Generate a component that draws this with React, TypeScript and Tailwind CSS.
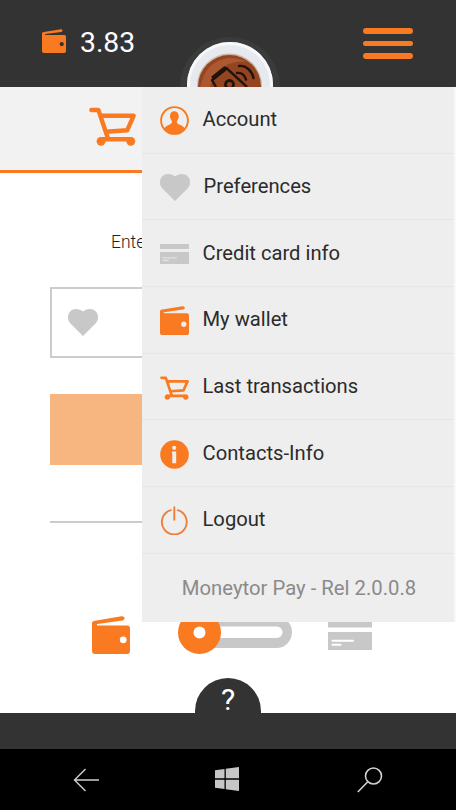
import React from "react";

type IconProps = { className?: string };

const WalletIcon: React.FC<IconProps & { hole?: string }> = ({
  className,
  hole = "#ffffff",
}) => (
  <svg viewBox="0 0 38 38" className={className} fill="#f97a20">
    <path d="M0 7.5C0 5.5 1.2 5 3 4.7L29.6.3c3.4-.4 4 3.6.8 4.3L5.5 8.1H5v1.5h30c2 0 3 1 3 3V35c0 2-1 3-3 3H3.2C1.2 38 0 37 0 35z" />
    <circle cx="31.2" cy="23.8" r="3.4" fill={hole} />
  </svg>
);

const CartIcon: React.FC<IconProps> = ({ className }) => (
  <svg
    viewBox="0 0 47 39"
    className={className}
    fill="none"
    stroke="#f97a20"
    strokeWidth="4.4"
    strokeLinecap="round"
    strokeLinejoin="round"
  >
    <path d="M2.4 3H9.4L19 31.5M11.5 8.8H44.6L38.3 23.2L17 24.8M12 32.2H41.5" />
    <circle cx="12" cy="34.3" r="4.4" fill="#f97a20" stroke="none" />
    <circle cx="41.8" cy="34.3" r="4.4" fill="#f97a20" stroke="none" />
  </svg>
);

const HeartIcon: React.FC<IconProps> = ({ className }) => (
  <svg viewBox="0 0 30 27" className={className} fill="#c8c8c8">
    <path d="M15 27L2.5 14.5C-1 11-.7 5.5 2.2 2.5C5.7-1 11.5-.4 15 2.6C18.5-.4 24.3-1 27.8 2.5C30.7 5.5 31 11 27.5 14.5z" />
  </svg>
);

const CardIcon: React.FC<IconProps & { line?: string }> = ({
  className,
  line = "#ffffff",
}) => (
  <svg viewBox="0 0 44 30" className={className} preserveAspectRatio="none">
    <path d="M0 0H44V7.5H0zM0 12H44V30H0z" fill="#c8c8c8" />
    <path
      d="M4.5 20.7H25M4.5 24.7H12.5"
      stroke={line}
      strokeWidth="2"
      strokeLinecap="round"
    />
  </svg>
);

const AccountIcon: React.FC<IconProps> = ({ className }) => (
  <svg viewBox="0 0 29 29" className={className}>
    <circle cx="14.5" cy="14.5" r="13.4" fill="none" stroke="#f97a20" strokeWidth="1.9" />
    <path
      d="M14.2 5.3c2.8 0 4.6 2 4.4 4.8c.5.7.3 1.8-.4 2.3c-.2 1.3-.7 2-1.4 2.7c0 2 .5 2.6 2.2 3.4c2.8 1.2 5 2 6 4.5a13 13 0 0 1-21 0c1-2.5 3.2-3.3 5.8-4.5c1.8-.8 2.2-1.5 2.2-3.4c-.7-.7-1.2-1.5-1.4-2.7c-.8-.5-.9-1.6-.5-2.3c-.2-2.9 1.5-4.8 4.1-4.8z"
      fill="#f97a20"
    />
  </svg>
);

const InfoIcon: React.FC<IconProps> = ({ className }) => (
  <svg viewBox="0 0 29 29" className={className}>
    <circle cx="14.5" cy="14.5" r="14.3" fill="#f97a20" />
    <circle cx="14.2" cy="7.8" r="2.1" fill="#eeeeee" />
    <path d="M12 11.5H16.2V23.2H12.3V13.2H12z" fill="#eeeeee" />
  </svg>
);

const PowerIcon: React.FC<IconProps> = ({ className }) => (
  <svg
    viewBox="0 0 29 29"
    className={className}
    fill="none"
    stroke="#ee7d3a"
    strokeWidth="1.9"
    strokeLinecap="round"
  >
    <path d="M10.8 4.1A12.4 12.4 0 1 0 17.8 4.1M14.3 1.2V13.8" />
  </svg>
);

const LogoBadge: React.FC<IconProps> = ({ className }) => (
  <svg viewBox="0 0 104 52" className={className}>
    <circle cx="52" cy="52" r="50" fill="#3b3b3b" />
    <circle cx="52" cy="50" r="43" fill="#e6e9ee" />
    <circle cx="52" cy="50" r="41.5" fill="none" stroke="#f6f8fa" strokeWidth="3" />
    <circle cx="51.5" cy="51" r="32.5" fill="#cfb5a6" />
    <circle cx="51.5" cy="51.5" r="31.5" fill="#934522" />
    <path d="M24 46C30 24 52 18 69 27C52 25 39 32 32 52H22z" fill="#ad5830" />
    <g fill="none" stroke="#21120c">
      <path d="M38 52L34 45.2L48.5 33.2L69 52" strokeWidth="2.4" strokeLinejoin="round" />
      <path d="M34.5 43.5L48 32.7" strokeWidth="4.6" />
      <circle cx="51.5" cy="49.5" r="4" strokeWidth="2.8" />
      <path
        d="M59 38C63 37.5 66.5 40 68 44.5M61 31C68 30 74 36 75.5 43"
        strokeWidth="2.4"
        strokeLinecap="round"
      />
    </g>
  </svg>
);

const menuItems = [
  { label: "Account", icon: <AccountIcon className="size-[29px]" /> },
  { label: "Preferences", icon: <HeartIcon className="w-[30px] h-[27px]" />, wide: true },
  {
    label: "Credit card info",
    icon: <CardIcon className="w-[29px] h-5" line="#e2e2e2" />,
  },
  {
    label: "My wallet",
    icon: <WalletIcon className="size-[29px]" hole="#eeeeee" />,
  },
  { label: "Last transactions", icon: <CartIcon className="w-[29px] h-6" /> },
  { label: "Contacts-Info", icon: <InfoIcon className="size-[29px]" /> },
  { label: "Logout", icon: <PowerIcon className="size-[29px]" /> },
];

const Header: React.FC = () => (
  <header className="relative flex h-[87px] items-center bg-[#333333] pl-[42px] pr-[43px]">
    <WalletIcon className="mt-[-5px] size-6" hole="#333333" />
    <span className="mb-px ml-[14px] text-[28.3px] leading-8 text-white">3.83</span>
    <button className="ml-auto flex flex-col gap-[7px]" aria-label="Menu">
      <span className="h-[5.5px] w-[50px] rounded-sm bg-[#f97a20]" />
      <span className="h-[5.5px] w-[50px] rounded-sm bg-[#f97a20]" />
      <span className="h-[5.5px] w-[50px] rounded-sm bg-[#f97a20]" />
    </button>
    <LogoBadge className="absolute bottom-0 left-[178px] h-[52px] w-[104px]" />
  </header>
);

const SideMenu: React.FC = () => (
  <nav className="absolute left-[142px] right-0 top-[87px] z-10 h-[535px] border-r-2 border-[#f8f8f8] bg-[#eeeeee]">
    <ul>
      {menuItems.map((item) => (
        <li
          key={item.label}
          className="flex h-[66.7px] items-center border-b border-[#e5e5e5] pl-[17.5px] text-[20.2px] text-[#2b2b2b]"
        >
          <span className="flex w-[30px] shrink-0 justify-start pt-[2px]">{item.icon}</span>
          <span className={item.wide ? "ml-[14px] pb-px" : "ml-[13px] pb-px"}>
            {item.label}
          </span>
        </li>
      ))}
    </ul>
    <p className="flex h-[68px] items-center justify-center pl-[2px] text-[20.3px] text-[#8a8a8a]">
      Moneytor Pay - Rel 2.0.0.8
    </p>
  </nav>
);

const Toggle: React.FC = () => (
  <svg viewBox="0 0 115 43" className="h-[43px] w-[115px]">
    <rect x="10" y="5.5" width="104" height="31.5" rx="15.7" fill="#c8c8c8" />
    <rect x="16" y="15.5" width="88.5" height="11.5" rx="5.7" fill="#ffffff" />
    <circle cx="21.5" cy="21.5" r="21.5" fill="#f97a20" />
    <circle cx="21.5" cy="21.5" r="6" fill="#ffffff" />
  </svg>
);

const NavBar: React.FC = () => (
  <div className="flex h-[61px] items-center justify-between bg-black px-[73px]">
    <svg viewBox="0 0 26 24" className="h-6 w-[26px]" fill="none" stroke="#d0d0d0" strokeWidth="1.4">
      <path d="M12.5 1L1.5 12L12.5 23M1.5 12H26" />
    </svg>
    <svg viewBox="0 0 24 24" className="mb-[2px] mr-[2px] size-6" fill="#c6c6c6">
      <path d="M0 3.3L9.5 2V11.3H0zM10.8 1.8L24 0V11.3H10.8zM0 12.7H9.5V22L0 20.7zM10.8 12.7H24V24L10.8 22.2z" />
    </svg>
    <svg viewBox="0 0 26 26" className="size-[26px]" fill="none" stroke="#d0d0d0" strokeWidth="1.6">
      <circle cx="16.5" cy="9" r="8" />
      <path d="M10.8 14.7L.8 25" />
    </svg>
  </div>
);

const App: React.FC = () => {
  return (
    <div className="relative flex h-[810px] w-[456px] flex-col overflow-hidden bg-white font-['Roboto',sans-serif]">
      <Header />
      <div className="flex h-[86px] shrink-0 border-b-[3px] border-[#f97a20] bg-[#f2f2f2] pl-[89px] pt-5">
        <CartIcon className="h-[39px] w-[47px]" />
      </div>
      <main className="flex flex-1 flex-col px-[50px]">
        <p className="ml-[61px] mt-[57px] text-[17.5px] font-light leading-6 text-[#222222]">
          Enter
        </p>
        <div className="mt-[33px] flex h-[71px] items-center border-2 border-[#cccccc] pl-4">
          <HeartIcon className="h-[27px] w-[30px]" />
        </div>
        <div className="mt-9 h-[71px] bg-[#f7b580]" />
        <div className="mt-14 h-[2px] bg-[#cccccc]" />
        <div className="mt-[88px] flex pl-[42px]">
          <WalletIcon className="mt-[5px] size-[38px]" />
          <div className="ml-[47.5px]">
            <Toggle />
          </div>
          <CardIcon className="ml-[35.5px] mt-[9px] h-[30px] w-11" />
        </div>
        <div className="mt-auto flex justify-center">
          <div className="h-[35px] w-[66px] rounded-t-full bg-[#333333] pt-[6px] text-center text-[30px] leading-8 text-white">
            ?
          </div>
        </div>
      </main>
      <footer>
        <div className="h-9 bg-[#333333]" />
        <NavBar />
      </footer>
      <SideMenu />
    </div>
  );
};

export default App;
